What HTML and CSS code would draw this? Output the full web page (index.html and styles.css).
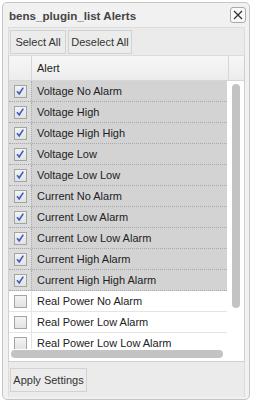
FILE: index.html
```html
<!DOCTYPE html>
<html lang="en">
<head>
  <meta charset="UTF-8">
  <title>bens_plugin_list Alerts</title>
  <link rel="stylesheet" href="styles.css">
</head>
<body>
  <div class="dialog">
    <div class="titlebar">
      <span class="title">bens_plugin_list Alerts</span>
      <button class="close" title="Close">
        <svg width="10" height="10" viewBox="0 0 10 10"><path d="M1 1 L9 9 M9 1 L1 9" stroke="#333" stroke-width="1.3" fill="none"/></svg>
      </button>
    </div>

    <div class="toolbar">
      <button class="btn btn-select">Select All</button>
      <button class="btn btn-deselect">Deselect All</button>
    </div>

    <div class="grid">
      <div class="grid-head">
        <div class="col-check"></div>
        <div class="col-name">Alert</div>
        <div class="col-scroll"></div>
      </div>
      <div class="grid-main">
        <div class="rows-wrap">
          <div class="rows" id="rows"></div>
          <div class="hscroll"><div class="hthumb"></div></div>
        </div>
        <div class="vscroll"><div class="vthumb"></div></div>
      </div>
    </div>

    <div class="footer">
      <button class="btn btn-apply">Apply Settings</button>
    </div>
  </div>

  <script>
    var alerts = [
      ["Voltage No Alarm", true],
      ["Voltage High", true],
      ["Voltage High High", true],
      ["Voltage Low", true],
      ["Voltage Low Low", true],
      ["Current No Alarm", true],
      ["Current Low Alarm", true],
      ["Current Low Low Alarm", true],
      ["Current High Alarm", true],
      ["Current High High Alarm", true],
      ["Real Power No Alarm", false],
      ["Real Power Low Alarm", false],
      ["Real Power Low Low Alarm", false]
    ];
    var tick = '<svg width="12" height="12" viewBox="0 0 12 12"><path d="M3 6.2 L5.2 8.8 L9.3 2.6" stroke="#3d5fc4" stroke-width="1.6" fill="none"/></svg>';
    var html = "";
    alerts.forEach(function (a) {
      html += '<div class="row' + (a[1] ? ' selected' : '') + '">' +
        '<div class="col-check"><span class="box">' + (a[1] ? tick : '') + '</span></div>' +
        '<div class="col-name">' + a[0] + '</div></div>';
    });
    document.getElementById("rows").innerHTML = html;
  </script>
</body>
</html>
```

FILE: styles.css
```css
html, body {
  margin: 0;
  background: #fff;
}
body {
  font-family: "Liberation Sans", Arial, sans-serif;
  font-size: 11px;
  color: #222;
}
.dialog {
  margin: 2px 0 0 2px;
  width: 237px;
  height: 396px;
  border: 1px solid #c6c6c6;
  border-radius: 5px;
  background: #f1f1f1;
  display: flex;
  flex-direction: column;
  padding: 0 4px 0 5px;
}
.titlebar {
  height: 24px;
  display: flex;
  align-items: center;
  justify-content: space-between;
}
.title {
  font-weight: bold;
  font-size: 11.6px;
  color: #444;
  margin-left: 1px;
  margin-top: 1px;
}
.close {
  width: 16px;
  height: 16px;
  padding: 0;
  margin-right: -1px;
  border: 1px solid #a8a8a8;
  border-radius: 3px;
  background: #fafafa;
  display: flex;
  align-items: center;
  justify-content: center;
}
.toolbar {
  height: 27px;
  border: 1px solid #dcdcdc;
  background: #ebebeb;
  display: flex;
  align-items: center;
  gap: 2px;
  padding-left: 1px;
}
.btn {
  font-family: "Liberation Sans", Arial, sans-serif;
  font-size: 11px;
  color: #333;
  height: 24px;
  padding: 0;
  border: 1px solid #d2d2d2;
  background: #ececec;
  border-radius: 0;
  text-align: center;
}
.btn-select {
  width: 56px;
}
.btn-deselect {
  width: 64px;
}
.btn-apply {
  width: 77px;
}
.grid {
  height: 305px;
  border: 1px solid #d0d0d0;
  border-top: none;
  background: #fff;
  display: flex;
  flex-direction: column;
}
.grid-head {
  height: 24px;
  display: flex;
  background: linear-gradient(#f7f7f7, #ececec);
  border-bottom: 1px solid #d6d6d6;
}
.grid-head .col-name {
  border-left: 1px solid #d6d6d6;
  display: flex;
  align-items: center;
  flex: 1;
  padding-left: 5px;
}
.col-check {
  width: 22px;
  flex: none;
  display: flex;
  align-items: center;
  justify-content: center;
}
.col-scroll {
  width: 15px;
  border-left: 1px solid #d6d6d6;
}
.grid-main {
  flex: 1;
  display: flex;
  min-height: 0;
}
.rows-wrap {
  flex: 1;
  display: flex;
  flex-direction: column;
  min-width: 0;
}
.rows {
  flex: 1;
  overflow: hidden;
  min-height: 0;
}
.row {
  height: 20px;
  display: flex;
  border-bottom: 1px solid #e4e4e4;
  margin-right: 1px;
}
.row .col-name {
  flex: 1;
  display: flex;
  align-items: center;
  padding-left: 5px;
  border-left: 1px solid #e4e4e4;
  white-space: nowrap;
}
.row.selected {
  background: #d3d3d3;
  border-bottom: 1px dotted #a9a9a9;
}
.row.selected .col-name {
  border-left: 1px dotted #a9a9a9;
}
.row.selected .col-check {
  background: #dcdcdc;
}
.box {
  width: 11px;
  height: 11px;
  border: 1px solid #a4a4a4;
  background: linear-gradient(#f4f4f4, #e2e2e2);
  display: flex;
  align-items: center;
  justify-content: center;
}
.box svg {
  flex: none;
}
.hscroll {
  height: 12px;
  display: flex;
  align-items: flex-start;
  padding-top: 1px;
  padding-left: 2px;
  box-sizing: border-box;
}
.hthumb {
  height: 8px;
  width: 212px;
  border-radius: 4px;
  background: #c3c3c3;
}
.vscroll {
  width: 16px;
  padding-top: 3px;
  display: flex;
  justify-content: center;
}
.vthumb {
  width: 8px;
  height: 224px;
  border-radius: 4px;
  background: #c3c3c3;
}
.footer {
  height: 35px;
  border-left: 1px solid #dcdcdc;
  border-right: 1px solid #dcdcdc;
  background: #ebebeb;
  display: flex;
  align-items: center;
  padding-left: 1px;
}
```
